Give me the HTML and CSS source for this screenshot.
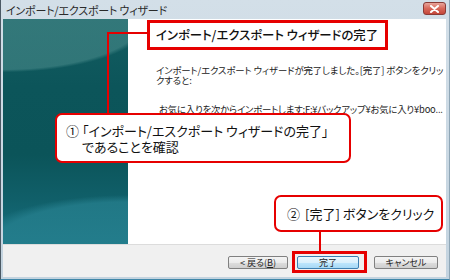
FILE: index.html
```html
<!DOCTYPE html>
<html lang="ja">
<head>
    <meta charset="UTF-8">
    <title>インポート/エクスポート ウィザード</title>
    <link rel="stylesheet" href="styles.css">
</head>
<body>
    <div class="window">
        <div class="titlebar">
            <span class="title">インポート/エクスポート ウィザード</span>
            <span class="close">
                <svg width="11" height="8" viewBox="0 0 11 8">
                    <path d="M2 1 L9 7 M9 1 L2 7" stroke="#fff" stroke-width="2" stroke-linecap="round"/>
                </svg>
            </span>
        </div>
        <div class="main">
            <div class="side"></div>
            <div class="content">
                <h1 class="heading">インポート/エクスポート ウィザードの完了</h1>
                <p class="desc">インポート/エクスポート ウィザードが完了しました。[完了] ボタンをクリッ<br>クすると:</p>
                <p class="path">お気に入りを次からインポートします:F:¥バックアップ¥お気に入り¥boo...</p>
            </div>
        </div>
        <div class="footer">
            <button class="btn">&lt; 戻る(<u>B</u>)</button>
            <button class="btn btn-default">完了</button>
            <button class="btn btn-cancel">キャンセル</button>
        </div>

        <!-- 注釈 -->
        <div class="lead lead1-h"></div>
        <div class="lead lead1-v"></div>
        <div class="callout callout1">
            <p><span class="num">①</span>「インポート/エスクポート ウィザードの完了」</p>
            <p class="indent">であることを確認</p>
        </div>
        <div class="callout callout2">
            <p><span class="num">②</span>[完了] ボタンをクリック</p>
        </div>
        <div class="lead lead2-v"></div>
        <div class="mark-finish"></div>
    </div>
</body>
</html>
```

FILE: styles.css
```css
* {
    box-sizing: border-box;
}
body {
    margin: 0;
    font-family: "Noto Sans CJK JP", "Noto Sans", sans-serif;
    background: #fff;
}
p {
    margin: 0;
}
.window {
    position: relative;
    width: 450px;
    height: 280px;
    display: flex;
    flex-direction: column;
    background: linear-gradient(180deg, #d3dfe8 0%, #c3d3df 100%);
    border-left: 1px solid #4b5964;
    border-right: 1px solid #8fa6b6;
    border-bottom: 1px solid #3f86a8;
    overflow: hidden;
}
.titlebar {
    height: 19px;
    display: flex;
    align-items: center;
    justify-content: space-between;
    padding: 0 3px 0 5px;
}
.title {
    font-size: 11px;
    color: #2a2a2a;
    font-feature-settings: "palt";
    letter-spacing: -0.2px;
}
.close {
    width: 23px;
    height: 13px;
    margin-top: -2px;
    display: flex;
    align-items: center;
    justify-content: center;
    border: 1px solid #8a3b36;
    border-radius: 3px;
    background: linear-gradient(180deg, #e8a59b 0%, #d8685a 50%, #c4473a 100%);
}
.main {
    flex: 1;
    display: flex;
    margin: 0 3px 0 2px;
}
.side {
    width: 125px;
    background:
        radial-gradient(ellipse 200px 72px at 0px 0px, rgba(72, 138, 138, 0.6) 0%, rgba(72, 138, 138, 0.6) 70%, rgba(72, 138, 138, 0) 74%),
        radial-gradient(ellipse 220px 70px at 125px 225px, rgba(40, 130, 145, 0.7) 0%, rgba(40, 130, 145, 0.7) 60%, rgba(40, 130, 145, 0) 70%),
        linear-gradient(180deg, #135d61 0%, #0c555a 30%, #0b5459 60%, #105f69 80%, #17707f 100%);
}
.content {
    flex: 1;
    background: #fff;
    padding: 1px 0 0 19px;
}
.heading {
    margin: 0;
    width: 241px;
    height: 30px;
    border: 3px solid #e60000;
    padding: 0 0 0 6px;
    font-size: 12.4px;
    font-weight: 500;
    line-height: 24px;
    color: #111;
    white-space: nowrap;
    font-feature-settings: "palt";
}
.desc {
    margin: 15px 0 0 9px;
    font-size: 9.4px;
    line-height: 10px;
    color: #222;
    white-space: nowrap;
    font-feature-settings: "palt";
    letter-spacing: -0.1px;
}
.path {
    margin: 19px 0 0 12px;
    font-size: 9.4px;
    line-height: 10px;
    color: #222;
    font-feature-settings: "palt";
    letter-spacing: -0.2px;
    white-space: nowrap;
}
.footer {
    height: 33px;
    margin: 0 3px 2px 2px;
    background: #f0f0f0;
    border-top: 1px solid #dcdcdc;
    display: flex;
    align-items: center;
    justify-content: flex-end;
    padding: 2px 8px 0 0;
}
.btn {
    width: 60px;
    height: 13px;
    margin: 0;
    padding: 0;
    font-family: inherit;
    font-size: 9px;
    line-height: 11px;
    color: #222;
    border: 1px solid #808080;
    border-radius: 2px;
    background: linear-gradient(180deg, #f4f4f4 0%, #ebebeb 50%, #dddddd 51%, #cfcfcf 100%);
    font-feature-settings: "palt";
}
.btn-default {
    width: 62px;
    margin-left: 9px;
    border-color: #3c7fb1;
    background: linear-gradient(180deg, #eaf6fd 0%, #d9f0fc 50%, #bee6fd 51%, #a7d9f5 100%);
}
.btn-cancel {
    width: 64px;
    margin-left: 15px;
}

/* 注釈 */
.lead {
    position: absolute;
    background: #e60000;
}
.lead1-h {
    left: 106px;
    top: 32px;
    width: 43px;
    height: 2px;
}
.lead1-v {
    left: 106px;
    top: 32px;
    width: 2px;
    height: 82px;
}
.lead2-v {
    left: 318px;
    top: 231px;
    width: 2px;
    height: 21px;
}
.callout {
    position: absolute;
    background: #fff;
    border: 2px solid #e60000;
    border-radius: 7px;
    font-size: 13px;
    line-height: 16px;
    color: #111;
    font-feature-settings: "palt";
    white-space: nowrap;
}
.num {
    margin-right: 3px;
}
.callout1 {
    left: 54px;
    top: 113px;
    width: 296px;
    height: 50px;
    padding: 8px 0 0 9px;
}
.callout1 .indent {
    padding-left: 16px;
}
.callout2 {
    left: 273px;
    top: 195px;
    width: 169px;
    height: 37px;
    padding: 9px 0 0 11px;
}
.callout2 .num {
    margin-right: 5px;
}
.mark-finish {
    position: absolute;
    left: 291px;
    top: 251px;
    width: 75px;
    height: 22px;
    border: 3px solid #e60000;
}
```
